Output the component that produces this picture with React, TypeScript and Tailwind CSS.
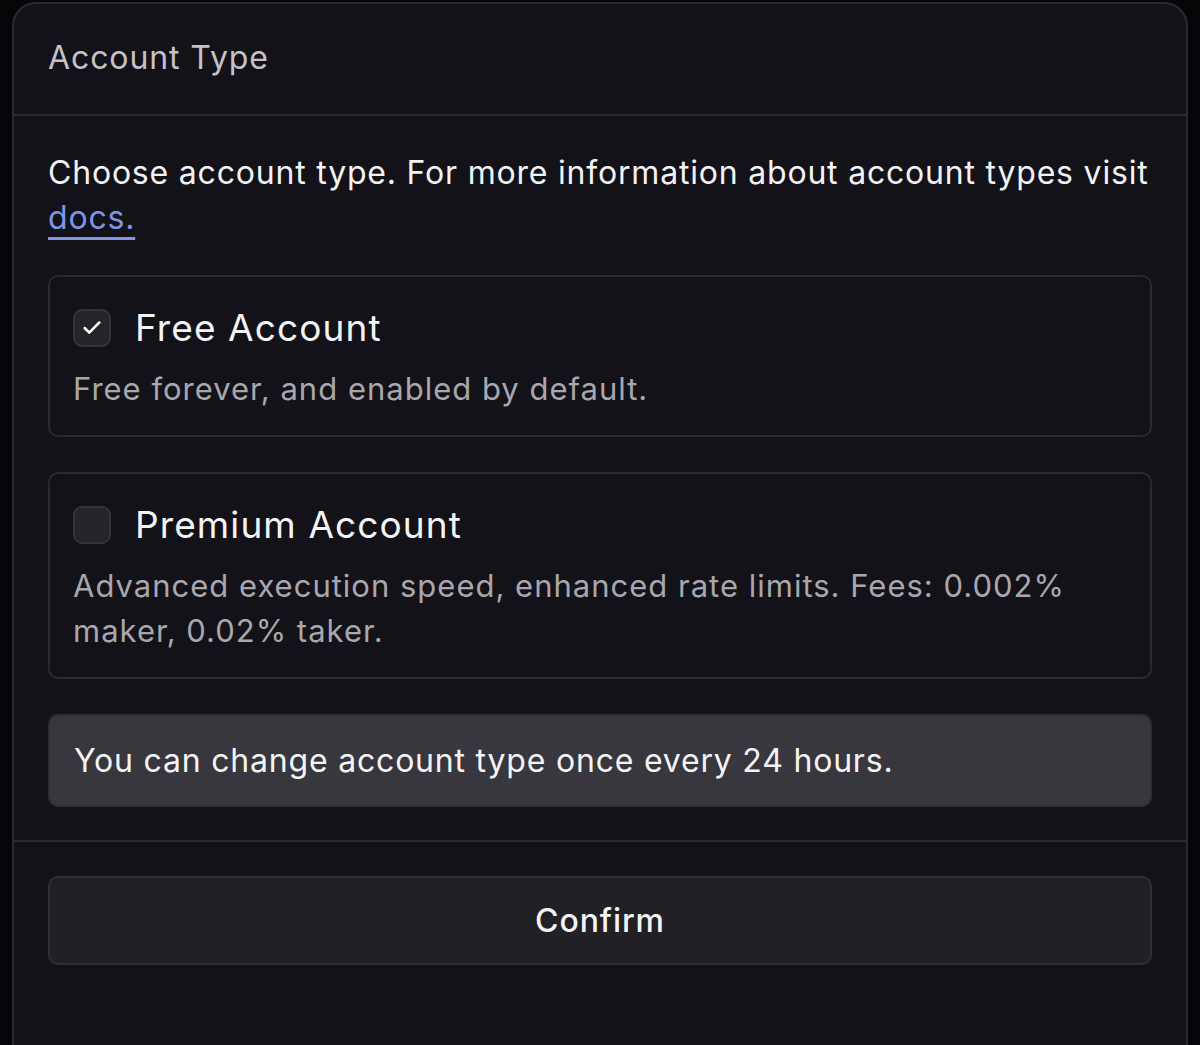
import { Check } from 'lucide-react';

function Option({ title, desc, checked }: { title: string; desc: string; checked?: boolean }) {
    return (
        <div className="rounded-[10px] border-2 border-[#2b2a31] px-[23px] pt-[23px] pb-[24px]">
            <div className="flex items-center gap-[24px] h-[56px]">
                <div className="w-[38px] h-[38px] rounded-[9px] border-2 border-[#34333a] bg-[#25242a] flex items-center justify-center">
                    {checked && <Check className="w-[22px] h-[22px] text-white" strokeWidth={2.75} />}
                </div>
                <span className="text-[37px] text-[#f4f4f6] tracking-[1.1px]">{title}</span>
            </div>
            <p className="mt-[10px] text-[31px] leading-[45px] text-[#a8a7ad] tracking-[1px]">{desc}</p>
        </div>
    );
}

export default function App() {
    return (
        <div className="min-h-[1045px] bg-[#060609] pt-[2px] px-[12px] overflow-hidden" style={{ fontFamily: 'Inter, "Noto Sans", sans-serif' }}>
            <div className="h-[1060px] rounded-t-[24px] border-2 border-[#2a2930] bg-[#131218]">
                {/* Header */}
                <div className="h-[112px] border-b-2 border-[#2a2930] px-[34px] flex items-center">
                    <h2 className="text-[32px] text-[#c3c2c8] tracking-[0.9px] -mt-[2px]">Account Type</h2>
                </div>

                {/* Body */}
                <div className="px-[34px] pt-[34px] pb-[33px] border-b-2 border-[#2a2930] space-y-[35px]">
                    <p className="text-[32px] leading-[45px] text-[#f2f2f4] tracking-[0.8px]">
                        Choose account type. For more information about account types visit{' '}
                        <a className="text-[#7d95e4] underline underline-offset-[8px] decoration-[3px]">docs.</a>
                    </p>

                    <Option title="Free Account" desc="Free forever, and enabled by default." checked />
                    <Option
                        title="Premium Account"
                        desc="Advanced execution speed, enhanced rate limits. Fees: 0.002% maker, 0.02% taker."
                    />

                    <div className="rounded-[10px] bg-[#38373d] border-2 border-[#2e2d33] px-[24px] py-[22px]">
                        <p className="text-[32px] leading-[45px] text-[#f4f4f6] tracking-[0.8px]">
                            You can change account type once every 24 hours.
                        </p>
                    </div>
                </div>

                {/* Footer */}
                <div className="px-[34px] pt-[34px]">
                    <button className="w-full h-[89px] rounded-[10px] border-2 border-[#2f2e35] bg-[#212025] text-[32px] font-medium text-[#f4f4f6] tracking-[0.9px]">
                        Confirm
                    </button>
                </div>
            </div>
        </div>
    );
}
